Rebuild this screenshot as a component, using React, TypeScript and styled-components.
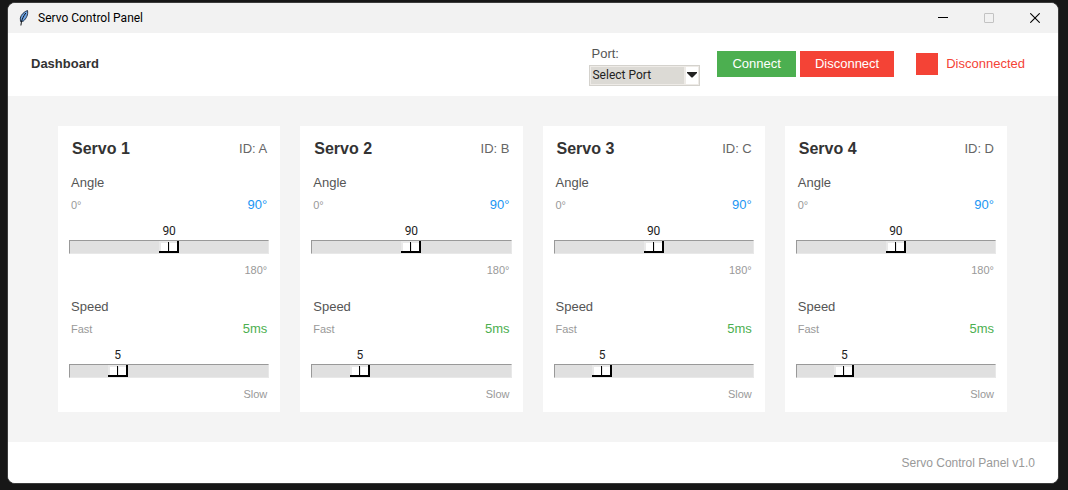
import React, { useState } from "react";
import styled, { createGlobalStyle, css } from "styled-components";

const GlobalStyle = createGlobalStyle`
  *, *::before, *::after { box-sizing: border-box; }
  body {
    margin: 0;
    background: #171717;
    font-family: "Liberation Sans", Arial, sans-serif;
    font-size: 13px;
    line-height: 20px;
    color: #333333;
  }
`;

const Desktop = styled.div`
  display: flex;
  min-height: 100vh;
  padding: 2px 9px 6px 7px;
`;

const Window = styled.div`
  flex: 1;
  min-width: 0;
  display: flex;
  flex-direction: column;
  overflow: hidden;
  border: 1px solid #3c3c3c;
  border-radius: 8px;
  background: #f4f4f4;
`;

const TitleBar = styled.div`
  display: flex;
  align-items: center;
  height: 30px;
  padding-left: 10px;
  background: #f2f2f2;
  color: #000000;
`;

const WindowTitle = styled.span`
  flex: 1;
  margin-left: 8px;
  font-family: Roboto, "Noto Sans", sans-serif;
  font-size: 12px;
`;

const CaptionButton = styled.button`
  display: flex;
  align-items: center;
  justify-content: center;
  width: 46px;
  height: 30px;
  padding: 0;
  border: 0;
  background: transparent;
`;

const Header = styled.header`
  display: flex;
  align-items: center;
  justify-content: space-between;
  height: 63px;
  padding: 0 33px 1px 23px;
  background: #ffffff;
`;

const PageTitle = styled.h1`
  margin: 0;
  font-size: 13px;
  font-weight: bold;
`;

const Toolbar = styled.div`
  display: flex;
  align-items: center;
`;

const PortField = styled.div`
  display: flex;
  flex-direction: column;
  width: 111px;
  margin-right: 17px;
`;

const PortLabel = styled.label`
  padding-left: 2px;
  line-height: 22px;
  color: #555555;
`;

const SelectShell = styled.div`
  display: grid;
  grid-template-columns: 1fr 14px;
  align-items: center;
  height: 21px;
  border: 1px solid #d4d2cd;
  background: #ffffff;
`;

const PortSelect = styled.select`
  grid-column: 1 / 3;
  grid-row: 1;
  width: 100%;
  height: 19px;
  padding: 0 0 0 1px;
  border: 1px solid #eeebe7;
  border-radius: 0;
  appearance: none;
  background: linear-gradient(
    to right,
    #dcdad5 calc(100% - 14px),
    #eeebe7 calc(100% - 14px),
    #eeebe7 calc(100% - 12px),
    #ffffff calc(100% - 12px)
  );
  color: #222222;
  font-family: Roboto, "Noto Sans", sans-serif;
  font-size: 12px;
  line-height: 17px;
`;

const SelectArrow = styled.svg`
  grid-column: 2;
  grid-row: 1;
  justify-self: center;
  pointer-events: none;
`;

const ActionButton = styled.button<{ $color: string }>`
  height: 26px;
  margin-right: 4px;
  padding: 0 15px;
  border: 0;
  background: ${(p) => p.$color};
  color: #ffffff;
  font: inherit;
`;

const Status = styled.div`
  display: flex;
  align-items: center;
  gap: 8px;
  margin-left: 18px;
  color: #f44336;
`;

const StatusLight = styled.span`
  width: 22px;
  height: 22px;
  background: #f44336;
`;

const Main = styled.main`
  flex: 1;
  display: grid;
  grid-template-columns: repeat(4, 1fr);
  align-items: start;
  gap: 20px;
  padding: 30px 51px 30px 50px;
`;

const Card = styled.section`
  padding: 13px 11px 10px;
  background: #ffffff;
`;

const CardHeader = styled.div`
  display: flex;
  justify-content: space-between;
  padding: 0 2px 0 3px;
  margin-bottom: 14px;
`;

const ServoName = styled.h2`
  margin: 0;
  font-size: 16px;
  line-height: 20px;
`;

const ServoId = styled.span`
  color: #666666;
`;

const Control = styled.div`
  & + & {
    margin-top: 19px;
  }
`;

const ControlLabel = styled.label`
  display: block;
  padding: 0 2px;
  color: #555555;
`;

const ReadingRow = styled.div`
  display: flex;
  align-items: center;
  justify-content: space-between;
  height: 24px;
  padding: 0 2px;
  margin-bottom: 5px;
`;

const Bound = styled.span`
  color: #999999;
  font-size: 11px;
  line-height: 16px;
`;

const Reading = styled.output<{ $color: string }>`
  color: ${(p) => p.$color};
`;

const UpperBound = styled.div`
  display: flex;
  justify-content: flex-end;
  padding: 0 2px;
  margin-top: 8px;
`;

const ThumbValue = styled.div`
  display: flex;
  justify-content: center;
  width: 0;
  height: 18px;
  color: #222222;
  font-family: Roboto, "Noto Sans", sans-serif;
  font-size: 12px;
  line-height: 18px;
`;

const thumb = css`
  appearance: none;
  width: 20px;
  height: 12px;
  border: 0;
  border-radius: 0;
  background:
    linear-gradient(#000000, #000000) 0 100% / 20px 2px no-repeat,
    linear-gradient(#000000, #000000) 100% 0 / 2px 12px no-repeat,
    linear-gradient(#000000, #000000) 9px 1px / 1px 11px no-repeat,
    linear-gradient(#e9e9e9, #e9e9e9) 10px 0 / 1px 10px no-repeat,
    linear-gradient(#e9e9e9, #e9e9e9) 0 0 / 18px 2px no-repeat,
    linear-gradient(#e9e9e9, #e9e9e9) 0 0 / 2px 10px no-repeat,
    #ffffff;
`;

const Slider = styled.input`
  display: block;
  appearance: none;
  width: 100%;
  height: 14px;
  margin: 0;
  border: 1px solid;
  border-color: #999999 #e8e8e8 #e8e8e8 #999999;
  background: #e0e0e0;
  &::-webkit-slider-thumb {
    ${thumb}
  }
  &::-moz-range-thumb {
    ${thumb}
  }
`;

const Footer = styled.footer`
  display: flex;
  align-items: center;
  justify-content: flex-end;
  height: 41px;
  padding: 0 23px;
  background: #ffffff;
  color: #999999;
  font-size: 12px;
`;

type ServoControlProps = {
  id: string;
  label: string;
  min: number;
  max: number;
  initial: number;
  lower: string;
  upper: string;
  unit: string;
  color: string;
};

function ServoControl({ id, label, min, max, initial, lower, upper, unit, color }: ServoControlProps) {
  const [value, setValue] = useState(initial);
  const ratio = (value - min) / (max - min);
  return (
    <Control>
      <ControlLabel htmlFor={id}>{label}</ControlLabel>
      <ReadingRow>
        <Bound>{lower}</Bound>
        <Reading htmlFor={id} $color={color}>
          {value}
          {unit}
        </Reading>
      </ReadingRow>
      <ThumbValue style={{ marginLeft: `calc(11px + ${ratio} * (100% - 22px))` }}>{value}</ThumbValue>
      <Slider
        id={id}
        type="range"
        min={min}
        max={max}
        value={value}
        onChange={(e) => setValue(Number(e.target.value))}
      />
      <UpperBound>
        <Bound>{upper}</Bound>
      </UpperBound>
    </Control>
  );
}

function FeatherIcon() {
  return (
    <svg width="12" height="18" viewBox="0 0 12 18" aria-hidden="true">
      <path d="M9.500 1.500C6.500 2.500 3 5.500 2.300 9L2.500 12.500L5.200 12.200C8.500 9.500 10.300 5.500 9.500 1.500Z" fill="#6ea4e6" stroke="#1b2738" strokeWidth="0.900" />
      <path d="M7.800 4C5.500 7 4.200 10 3.400 13L2.900 16.500" fill="none" stroke="#101418" strokeWidth="1" />
    </svg>
  );
}

const servos = ["A", "B", "C", "D"];

export default function App() {
  return (
    <>
      <GlobalStyle />
      <Desktop>
        <Window>
          <TitleBar>
            <FeatherIcon />
            <WindowTitle>Servo Control Panel</WindowTitle>
            <CaptionButton aria-label="Minimize">
              <svg width="10" height="10" viewBox="0 0 10 10">
                <path d="M0 4.5H10" stroke="#000000" />
              </svg>
            </CaptionButton>
            <CaptionButton aria-label="Maximize" disabled>
              <svg width="10" height="10" viewBox="0 0 10 10">
                <rect x="0.5" y="0.5" width="9" height="9" rx="0.5" fill="none" stroke="#c3c3c3" />
              </svg>
            </CaptionButton>
            <CaptionButton aria-label="Close">
              <svg width="10" height="10" viewBox="0 0 10 10">
                <path d="M0.300 0.300L9.700 9.700M9.700 0.300L0.300 9.700" stroke="#000000" strokeWidth="1.100" />
              </svg>
            </CaptionButton>
          </TitleBar>
          <Header>
            <PageTitle>Dashboard</PageTitle>
            <Toolbar>
              <PortField>
                <PortLabel htmlFor="port">Port:</PortLabel>
                <SelectShell>
                  <PortSelect id="port" defaultValue="">
                    <option value="">Select Port</option>
                  </PortSelect>
                  <SelectArrow width="10" height="6" viewBox="0 0 10 6" aria-hidden="true">
                    <path d="M0 0H10V1L5.500 5.500H4.500L0 1Z" fill="#222222" />
                  </SelectArrow>
                </SelectShell>
              </PortField>
              <ActionButton $color="#4caf50">Connect</ActionButton>
              <ActionButton $color="#f44336">Disconnect</ActionButton>
              <Status role="status">
                <StatusLight />
                Disconnected
              </Status>
            </Toolbar>
          </Header>
          <Main>
            {servos.map((servo, index) => (
              <Card key={servo}>
                <CardHeader>
                  <ServoName>Servo {index + 1}</ServoName>
                  <ServoId>ID: {servo}</ServoId>
                </CardHeader>
                <ServoControl
                  id={`angle-${servo}`}
                  label="Angle"
                  min={0}
                  max={180}
                  initial={90}
                  lower="0°"
                  upper="180°"
                  unit="°"
                  color="#2196f3"
                />
                <ServoControl
                  id={`speed-${servo}`}
                  label="Speed"
                  min={1}
                  max={20}
                  initial={5}
                  lower="Fast"
                  upper="Slow"
                  unit="ms"
                  color="#4caf50"
                />
              </Card>
            ))}
          </Main>
          <Footer>Servo Control Panel v1.0</Footer>
        </Window>
      </Desktop>
    </>
  );
}
